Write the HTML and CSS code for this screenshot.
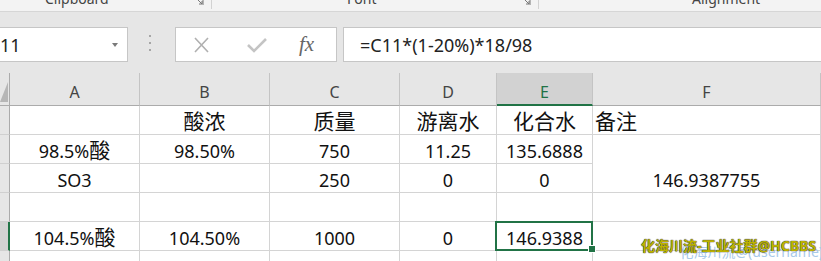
FILE: index.html
```html
<!DOCTYPE html>
<html lang="zh-CN">
<head>
    <meta charset="UTF-8">
    <title>Sheet</title>
    <link rel="stylesheet" href="styles.css">
</head>
<body>
    <div class="ribbon">
        <div class="group group-clip">
            <span class="group-label">Clipboard</span>
            <svg class="launcher" width="10" height="10" viewBox="0 0 10 10"><path d="M1 1h8v8M3 3l5 5M5 8h3V5" fill="none" stroke="#777" stroke-width="1"/></svg>
        </div>
        <div class="group group-font">
            <span class="group-label">Font</span>
            <svg class="launcher" width="10" height="10" viewBox="0 0 10 10"><path d="M1 1h8v8M3 3l5 5M5 8h3V5" fill="none" stroke="#777" stroke-width="1"/></svg>
        </div>
        <div class="group group-align">
            <span class="group-label">Alignment</span>
        </div>
    </div>

    <div class="formula-bar">
        <div class="name-box">E11<span class="dd-arrow"></span></div>
        <div class="splitter"><i></i><i></i><i></i></div>
        <div class="fn-box">
            <svg class="fn-cancel" width="17" height="16" viewBox="0 0 17 16"><path d="M2 1l13 14M15 1L2 15" stroke="#b0b0b0" stroke-width="1.6" fill="none"/></svg>
            <svg class="fn-enter" width="20" height="16" viewBox="0 0 20 16"><path d="M1 8l6 6L19 2" stroke="#c4c4c4" stroke-width="2.6" fill="none"/></svg>
            <span class="fn-fx">fx</span>
        </div>
        <div class="formula-input">=C11*(1-20%)*18/98</div>
    </div>

    <div class="sheet">
        <div class="corner"></div>
        <div class="col-head">A</div>
        <div class="col-head">B</div>
        <div class="col-head">C</div>
        <div class="col-head">D</div>
        <div class="col-head sel">E</div>
        <div class="col-head">F</div>
        <div class="col-head"></div>

        <div class="row-head"></div>
        <div class="cell"></div>
        <div class="cell"><span class="cn">酸浓</span></div>
        <div class="cell"><span class="cn">质量</span></div>
        <div class="cell"><span class="cn">游离水</span></div>
        <div class="cell"><span class="cn">化合水</span></div>
        <div class="cell left"><span class="cn">备注</span></div>
        <div class="cell"></div>

        <div class="row-head"></div>
        <div class="cell">98.5%<span class="cn">酸</span></div>
        <div class="cell">98.50%</div>
        <div class="cell">750</div>
        <div class="cell">11.25</div>
        <div class="cell">135.6888</div>
        <div class="cell merged">146.9387755</div>
        <div class="cell"></div>

        <div class="row-head"></div>
        <div class="cell">SO3</div>
        <div class="cell"></div>
        <div class="cell">250</div>
        <div class="cell">0</div>
        <div class="cell">0</div>
        <div class="cell"></div>

        <div class="row-head"></div>
        <div class="cell"></div>
        <div class="cell"></div>
        <div class="cell"></div>
        <div class="cell"></div>
        <div class="cell"></div>
        <div class="cell"></div>
        <div class="cell"></div>

        <div class="row-head sel"></div>
        <div class="cell">104.5%<span class="cn">酸</span></div>
        <div class="cell">104.50%</div>
        <div class="cell">1000</div>
        <div class="cell">0</div>
        <div class="cell active">146.9388</div>
        <div class="cell"></div>
        <div class="cell"></div>

        <div class="row-head"></div>
        <div class="cell"></div>
        <div class="cell"></div>
        <div class="cell"></div>
        <div class="cell"></div>
        <div class="cell"></div>
        <div class="cell"></div>
        <div class="cell"></div>
    </div>

    <div class="watermark-back">化海川流@(username)</div>
    <div class="watermark">化海川流-工业社群@HCBBS</div>
</body>
</html>
```

FILE: styles.css
```css
body {
    margin: 0;
    width: 821px;
    height: 261px;
    overflow: hidden;
    position: relative;
    background-color: #fff;
    font-family: "Noto Sans", "Noto Sans CJK SC", sans-serif;
    color: #111;
}

/* ribbon, only the bottom edge is visible */
.ribbon {
    height: 11px;
    background-color: #f3f3f3;
    border-bottom: 1px solid #d6d6d6;
    display: flex;
    overflow: hidden;
}

.group {
    display: flex;
    align-items: flex-start;
    height: 9px;
    border-right: 1px solid #d2d2d2;
}

.group-clip { width: 211px; }
.group-font { width: 326px; }
.group-align { flex: 1; border-right: none; }

.group-label {
    font-size: 14px;
    line-height: 14px;
    margin-top: -8px;
    color: #444;
}

.group-clip .group-label { margin-left: 45px; }
.group-font .group-label { margin-left: 135px; }
.group-align .group-label { margin-left: 153px; }

.launcher {
    margin-left: auto;
    margin-right: 7px;
    margin-top: -4px;
}

/* formula bar */
.formula-bar {
    height: 61px;
    box-sizing: border-box;
    padding-top: 15px;
    display: flex;
    align-items: flex-start;
    background-color: #e6e6e6;
}

.name-box {
    width: 142px;
    height: 35px;
    margin-left: -14px;
    box-sizing: border-box;
    padding-left: 3px;
    display: flex;
    align-items: center;
    background-color: #fff;
    border: 1px solid #c6c6c6;
    font-size: 18px;
    color: #222;
}

.dd-arrow {
    margin-left: auto;
    margin-right: 9px;
    border-left: 3.5px solid transparent;
    border-right: 3.5px solid transparent;
    border-top: 4px solid #7a7a7a;
}

.splitter {
    width: 3px;
    margin-left: 21px;
    margin-top: 8px;
    display: flex;
    flex-direction: column;
    gap: 5px;
}

.splitter i {
    width: 2px;
    height: 2px;
    background-color: #a6a6a6;
}

.fn-box {
    width: 162px;
    height: 35px;
    margin-left: 23px;
    box-sizing: border-box;
    display: flex;
    align-items: center;
    background-color: #fff;
    border: 1px solid #c6c6c6;
}

.fn-cancel { margin-left: 17px; }
.fn-enter { margin-left: 37px; }

.fn-fx {
    margin-left: 32px;
    font-family: "Liberation Serif", serif;
    font-style: italic;
    font-size: 21px;
    color: #666;
}

.formula-input {
    flex: 1;
    height: 35px;
    margin-left: 6px;
    margin-right: -5px;
    box-sizing: border-box;
    padding-left: 16px;
    display: flex;
    align-items: center;
    background-color: #fff;
    border: 1px solid #c6c6c6;
    font-size: 18px;
    color: #222;
}

/* grid */
.sheet {
    display: grid;
    grid-template-columns: 10px 130px 130px 130px 97px 96px 228px 20px;
    grid-template-rows: 33px repeat(6, 29px);
}

.sheet > div {
    box-sizing: border-box;
}

.corner {
    position: relative;
    background-color: #e6e6e6;
    border-right: 1px solid #ababab;
    border-bottom: 1px solid #ababab;
}

.corner::after {
    content: "";
    position: absolute;
    right: 1px;
    bottom: 3px;
    width: 8px;
    height: 20px;
    background-color: #b6b6b6;
    clip-path: polygon(100% 0, 100% 100%, 0 100%);
}

.col-head {
    display: flex;
    align-items: flex-end;
    justify-content: center;
    padding-bottom: 5px;
    background-color: #e6e6e6;
    border-right: 1px solid #c4c4c4;
    border-bottom: 1px solid #ababab;
    font-size: 16px;
    line-height: 16px;
    color: #444;
}

.col-head.sel {
    background-color: #d2d2d2;
    color: #217346;
    border-bottom: 2px solid #217346;
    padding-bottom: 4px;
}

.row-head {
    background-color: #e6e6e6;
    border-right: 1px solid #ababab;
    border-bottom: 1px solid #d0d0d0;
}

.row-head.sel {
    background-color: #d2d2d2;
    border-right: 2px solid #217346;
}

/* text sits on the bottom of the cell, like excel */
.cell {
    padding-top: 7px;
    text-align: center;
    border-right: 1px solid #d4d4d4;
    border-bottom: 1px solid #d4d4d4;
    font-size: 18px;
    line-height: 18px;
    white-space: nowrap;
}

.cell.left {
    text-align: left;
    padding-left: 2px;
}

.cell.merged {
    grid-row: span 2;
    padding-top: 36px;
}

.cn {
    font-size: 21px;
    line-height: 0;
}

.cell.active {
    position: relative;
}

.cell.active::after {
    content: "";
    position: absolute;
    left: -2px;
    top: -1px;
    right: -1px;
    bottom: -1px;
    border: 2px solid #217346;
}

.cell.active::before {
    content: "";
    position: absolute;
    right: -4px;
    bottom: -3px;
    width: 6px;
    height: 6px;
    background-color: #217346;
    border: 1px solid #fff;
    z-index: 1;
}

/* watermark over the sheet */
.watermark {
    position: absolute;
    right: 5px;
    top: 235px;
    font-size: 14px;
    font-weight: bold;
    color: #bdb300;
    text-shadow: 0 0 1px #2a2a2a, 0 0 1px #2a2a2a;
}

.watermark-back {
    position: absolute;
    right: -2px;
    top: 241px;
    font-size: 14px;
    color: #a9c9ea;
}
```
